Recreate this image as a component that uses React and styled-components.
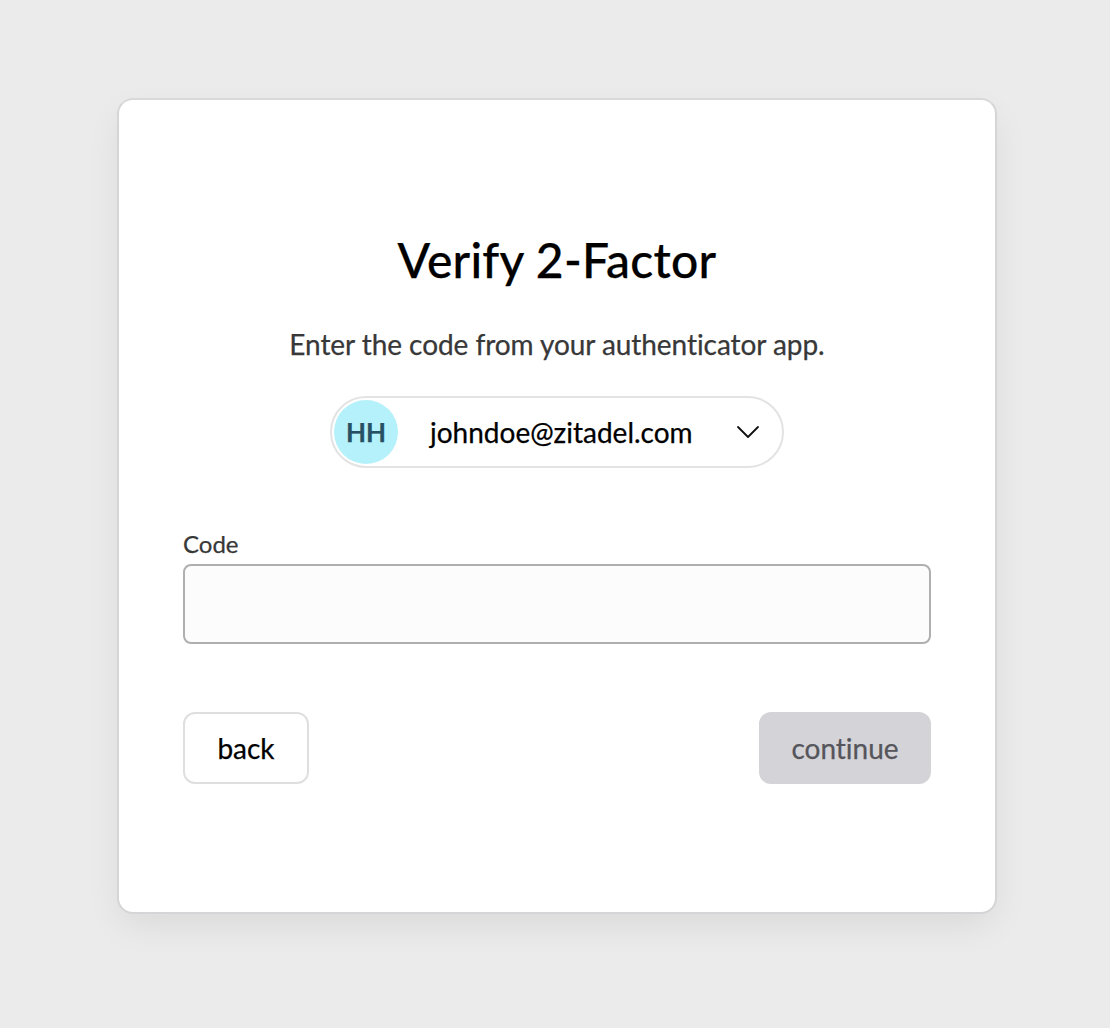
import React from "react";
import styled, { createGlobalStyle } from "styled-components";

const GlobalStyle = createGlobalStyle`
  * { box-sizing: border-box; }
  body {
    margin: 0;
    background: #ebebeb;
    font-family: Lato, "Liberation Sans", sans-serif;
  }
  #root, button {
    -webkit-text-stroke: 0.25px currentColor;
  }
  #root {
    font-variant-ligatures: none;
  }
`;

const Page = styled.main`
  display: flex;
  justify-content: center;
  align-items: flex-start;
  height: 1028px;
  padding: 98px 113px 0 117px;
`;

const Card = styled.section`
  display: flex;
  flex-direction: column;
  align-items: center;
  width: 880px;
  height: 816px;
  padding: 128px 64px 0;
  background: #fff;
  border: 2px solid #d5d5d8;
  border-top-color: #d9d9da;
  border-radius: 16px;
  box-shadow: 0 14px 36px -4px rgba(0, 0, 0, 0.08);
`;

const Title = styled.h1`
  margin: 0;
  font-size: 48px;
  line-height: 64px;
  font-weight: 500;
  letter-spacing: 0.25px;
  color: #000;
`;

const Description = styled.p`
  margin: 32px 0 0;
  font-size: 28px;
  line-height: 40px;
  letter-spacing: -0.06px;
  color: #383838;
`;

const Account = styled.button`
  display: flex;
  align-items: center;
  width: 454px;
  height: 72px;
  margin: 32px 0 0;
  padding: 2px;
  background: #fff;
  border: 2px solid #e3e3e4;
  border-radius: 36px;
  font: 400 28px/40px Lato, sans-serif;
  font-variant-ligatures: none;
  color: #000;
`;

const Avatar = styled.span`
  display: flex;
  align-items: center;
  justify-content: center;
  width: 64px;
  height: 64px;
  border-radius: 50%;
  background: #b5f1fa;
  color: #285064;
  font-size: 26px;
  font-weight: 700;
`;

const Email = styled.span`
  margin-left: 32px;
`;

const Chevron = styled.svg`
  margin: 0 20px 0 auto;
`;

const Field = styled.label`
  display: flex;
  flex-direction: column;
  width: 748px;
  margin-top: 60px;
  font-size: 24px;
  line-height: 32px;
  color: #383838;
`;

const Input = styled.input`
  width: 100%;
  height: 80px;
  margin-top: 4px;
  padding: 0 16px;
  background: #fcfcfc;
  border: 2px solid #afafb0;
  border-radius: 8px;
  font: inherit;
  outline: none;
`;

const Actions = styled.div`
  display: flex;
  justify-content: space-between;
  width: 748px;
  margin-top: 68px;
`;

const Button = styled.button`
  width: ${(p) => (p.$muted ? 172 : 126)}px;
  height: 72px;
  padding: 0;
  font: 400 28px/40px Lato, sans-serif;
  font-variant-ligatures: none;
  border: 2px solid ${(p) => (p.$muted ? "#d4d3d8" : "#dfdfe0")};
  border-radius: 12px;
  background: ${(p) => (p.$muted ? "#d4d3d8" : "#fff")};
  color: ${(p) => (p.$muted ? "#55555b" : "#000")};
`;

export default function App() {
  return (
    <>
      <GlobalStyle />
      <Page>
        <Card>
          <Title>Verify 2-Factor</Title>
          <Description>Enter the code from your authenticator app.</Description>
          <Account>
            <Avatar>HH</Avatar>
            <Email>johndoe@zitadel.com</Email>
            <Chevron width="24" height="24" viewBox="0 0 24 24" fill="none">
              <path d="M2 7 L12 17 L22 7" stroke="#111" strokeWidth="1.8" strokeLinecap="round" strokeLinejoin="round" />
            </Chevron>
          </Account>
          <Field>
            Code
            <Input type="text" />
          </Field>
          <Actions>
            <Button>back</Button>
            <Button $muted>continue</Button>
          </Actions>
        </Card>
      </Page>
    </>
  );
}
